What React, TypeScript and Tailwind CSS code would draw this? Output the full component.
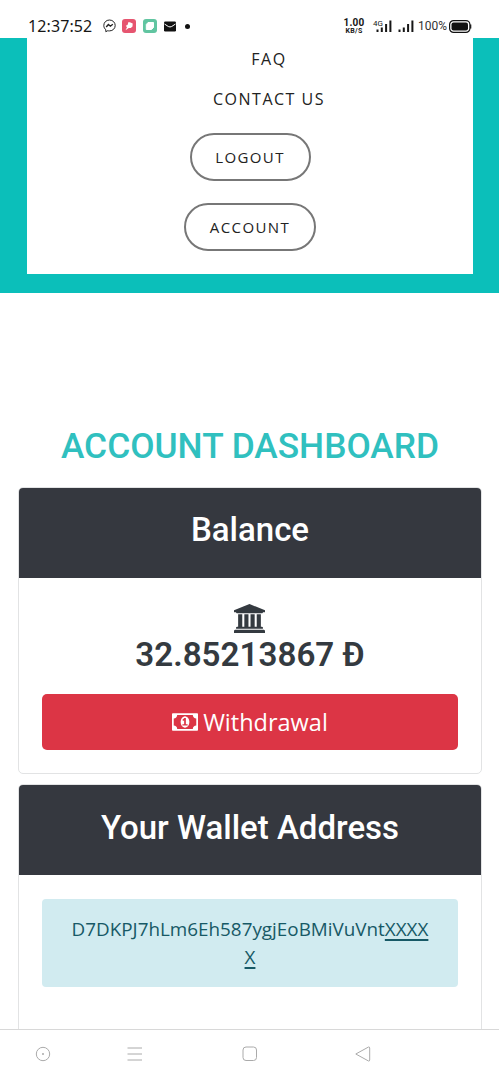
import type { ReactNode } from "react";

function Signal() {
  return (
    <svg className="h-3 w-4" viewBox="0 0 16 12" stroke="#161616" strokeWidth="2">
      <path d="M1.5 12V9.5M5.8 12V7.5M10.1 12V4M14.4 12V0.5" />
    </svg>
  );
}

function StatusBar() {
  return (
    <header className="flex h-[38px] shrink-0 items-center pt-[14px] pl-7 font-[Roboto,sans-serif] text-[#161616]">
      <time className="w-[75px] font-['Noto_Sans',sans-serif] text-[16px] leading-6 tracking-[0.1px] whitespace-nowrap">
        12:37:52
      </time>
      <svg className="h-[14px] w-[13px]" viewBox="0 0 13 14" fill="none" stroke="#222" strokeWidth="1">
        <path d="M6.5 1C3.2 1 .8 3.4.8 6.5c0 1.8.8 3.2 2 4.2v2l2-1c.5.2 1.1.2 1.7.2 3.3 0 5.7-2.4 5.7-5.4S9.800 1 6.500 1Z" />
        <path d="m3.2 8 2.200-2.500 2 1.700 2.400-1.900" strokeWidth="1.400" />
      </svg>
      <svg className="ml-[6px] h-[14px] w-[14px]" viewBox="0 0 14 14">
        <rect width="14" height="14" rx="3" fill="#e65570" />
        <path d="m6.500 3 2 .4 2.200 1.200-.2 3-1.700 1.500-2-.1-3.300 2.200 1.500-3-1.200-1.500 1.700-.8Z" fill="#fff" />
      </svg>
      <svg className="ml-[7px] h-[14px] w-[14px]" viewBox="0 0 14 14">
        <rect width="14" height="14" rx="3" fill="#61c5a1" />
        <path d="M5 3.500h5.500v5L8.500 10.500H3.300v-5Z" fill="#fff" stroke="#fff" strokeLinejoin="round" />
      </svg>
      <svg className="ml-[7px] h-[11px] w-[12px]" viewBox="0 0 12 11">
        <rect y=".5" width="12" height="10" rx="1.200" fill="#111" />
        <path d="m.5 3 3.800 2.500q1.700.9 3.400 0L11.500 3" fill="none" stroke="#fff" />
      </svg>
      <i className="ml-[9px] size-[5px] rounded-full bg-[#111]" />
      <div className="ml-[153px] flex w-[22px] flex-col items-center text-center font-bold">
        <span className="text-[10px] leading-[9px] tracking-[0.2px]">1.00</span>
        <span className="text-[7px] leading-[8px] tracking-[0.3px]">KB/S</span>
      </div>
      <div className="relative ml-[9px] flex h-3 w-[18px] justify-end">
        <Signal />
        <span className="absolute top-0 -left-[1px] text-[8px] leading-[7px]">4G</span>
      </div>
      <div className="ml-[6px] flex h-3 w-4">
        <Signal />
      </div>
      <span className="ml-[4px] w-[29px] text-[12px] leading-4 whitespace-nowrap text-[#333]">100%</span>
      <svg className="ml-[2px] h-[13px] w-[23px]" viewBox="0 0 23 13">
        <rect x=".6" y=".6" width="20.300" height="11.800" rx="4" fill="none" stroke="#111" strokeWidth="1.200" />
        <rect x="2.500" y="2.500" width="16.500" height="8" rx="2" fill="#111" />
        <path d="M21.700 4.500v4" stroke="#111" strokeWidth="1.200" />
      </svg>
    </header>
  );
}

function CardTitle({ children }: { children: ReactNode }) {
  return (
    <h2 className="flex h-[90px] items-start justify-center rounded-t-[4px] bg-[#35383f] pt-[22px] font-[Roboto,sans-serif] text-[33px] leading-[40px] font-medium text-white">
      {children}
    </h2>
  );
}

export default function App() {
  return (
    <div className="flex h-[1080px] w-[499px] flex-col overflow-hidden bg-white font-['Open_Sans',sans-serif]">
      <StatusBar />
      <div className="h-[255px] shrink-0 bg-[#0bbfba] pr-[26px] pb-[19px] pl-[27px]">
        <nav className="flex h-[236px] flex-col items-center bg-white pt-[9px] text-[16px] leading-6 tracking-[1.500px] text-[#222]">
          <a className="ml-[38px]">FAQ</a>
          <a className="mt-4 ml-[38px]">CONTACT US</a>
          <a className="mt-[22px] flex h-[48px] w-[121px] items-center justify-center rounded-full border-2 border-[#777] text-[15px] tracking-[1.400px]">
            LOGOUT
          </a>
          <a className="mt-[22px] flex h-[48px] w-[132px] items-center justify-center rounded-full border-2 border-[#777] text-[15px] tracking-[1.400px]">
            ACCOUNT
          </a>
        </nav>
      </div>
      <main className="flex h-[736px] shrink-0 flex-col overflow-hidden pt-[131px] pr-[17px] pl-[18px]">
        <h1 className="text-center font-[Roboto,sans-serif] text-[35.300px] leading-[44px] font-medium whitespace-nowrap text-[#30c0bf]">
          ACCOUNT DASHBOARD
        </h1>
        <section className="mt-[19px] h-[287px] shrink-0 rounded-[5px] border border-[#e2e3e4]">
          <CardTitle>Balance</CardTitle>
          <div className="flex flex-col items-center px-[23px] pt-[26px] text-[#343a40]">
            <svg className="mr-[2px] h-[29px] w-[31px]" viewBox="0 0 1920 1792" fill="currentColor">
              <path d="M960 0l960 384v128h-128q0 26-20.500 45t-48.500 19h-1526q-28 0-48.500-19t-20.500-45h-128v-128zM256 640h256v768h128v-768h256v768h128v-768h256v768h128v-768h256v768h59q28 0 48.500 19t20.500 45v64h-1664v-64q0-26 20.500-45t48.500-19h59v-768zM1851 1600q28 0 48.500 19t20.500 45v128h-1920v-128q0-26 20.500-45t48.500-19h1782z" />
            </svg>
            <strong className="mt-[2px] font-[Roboto,sans-serif] text-[33.200px] leading-[40px] font-semibold whitespace-nowrap">
              32.85213867 Đ
            </strong>
            <button className="mt-[19px] flex h-[56px] w-full items-center justify-center gap-[5px] rounded-[5px] bg-[#dc3545] text-[23.500px] leading-8 text-white">
              <svg className="h-[26px] w-[26px]" viewBox="0 0 1920 1792" fill="currentColor">
                <path d="M768 1152h384v-96h-128v-448h-114l-148 137 77 80q42-37 55-57h2v288h-128v96zm512-256q0 70-21 142t-59.500 134-101.500 101-138 39-138-39-101.500-101-59.500-134-21-142 21-142 59.500-134 101.500-101 138-39 138 39 101.500 101 59.500 134 21 142zm512 256v-512q-106 0-181-75t-75-181h-1152q0 106-75 181t-181 75v512q106 0 181 75t75 181h1152q0-106 75-181t181-75zm128-832v1152q0 26-19 45t-45 19h-1792q-26 0-45-19t-19-45v-1152q0-26 19-45t45-19h1792q26 0 45 19t19 45z" />
              </svg>
              Withdrawal
            </button>
          </div>
        </section>
        <section className="mt-[10px] h-[260px] shrink-0 rounded-t-[5px] border border-[#e2e3e4]">
          <CardTitle>
            <span className="pt-[1px]">Your Wallet Address</span>
          </CardTitle>
          <div className="px-[23px] pt-[24px]">
            <p className="h-[88px] rounded-[4px] bg-[#d1ebf0] pt-[16px] text-center text-[18.850px] leading-[28px] text-[#175966]">
              D7DKPJ7hLm6Eh587ygjEoBMiVuVnt<u className="decoration-[1.500px] underline-offset-[3px]">XXXX</u>
              <br />
              <u className="decoration-[1.500px] underline-offset-[3px]">X</u>
            </p>
          </div>
        </section>
      </main>
      <footer className="h-[51px] shrink-0 border-t border-[#d8d8d8] pt-[16px]">
        <div className="flex items-center pl-[35px] text-[#aaa]">
          <svg className="size-4" viewBox="0 0 16 16" fill="none" stroke="currentColor">
            <circle cx="8" cy="8" r="6.700" />
            <circle cx="8" cy="8" r="1" fill="currentColor" stroke="none" />
          </svg>
          <svg className="ml-[76px] size-4" viewBox="0 0 16 16" fill="none" stroke="currentColor">
            <path d="M.5 2H15M.5 8H15M.5 14H15" />
          </svg>
          <svg className="ml-[99px] size-4" viewBox="0 0 16 16" fill="none" stroke="currentColor">
            <rect x="1" y="1" width="13.500" height="13.500" rx="3" />
          </svg>
          <svg className="ml-[97px] size-4" viewBox="0 0 16 16" fill="none" stroke="currentColor" strokeLinejoin="round">
            <path d="M.8 8 13.500 1q1.200-.2 1.200 1v12q0 1.200-1.200 1Z" />
          </svg>
        </div>
      </footer>
    </div>
  );
}
